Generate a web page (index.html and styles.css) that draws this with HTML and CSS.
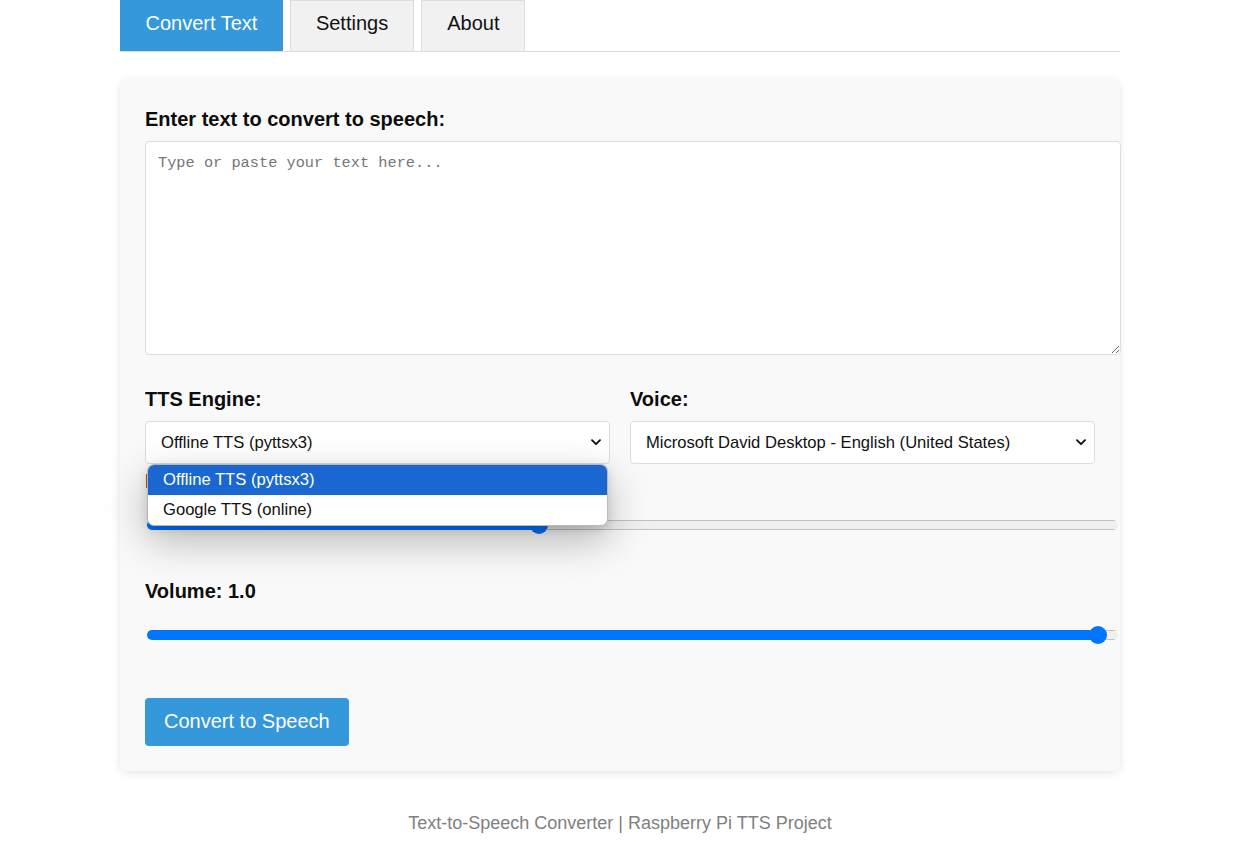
FILE: index.html
```html
<!DOCTYPE html>
<html lang="en">
<head>
<meta charset="utf-8">
<title>Text-to-Speech Converter</title>
<link rel="stylesheet" href="styles.css">
</head>
<body>
<div class="page">
  <nav class="tabs">
    <button class="tab active">Convert Text</button>
    <button class="tab">Settings</button>
    <button class="tab">About</button>
  </nav>

  <main class="card">
    <div class="group group-text">
      <label class="label" for="text">Enter text to convert to speech:</label>
      <textarea id="text" class="text-input" placeholder="Type or paste your text here..."></textarea>
    </div>

    <div class="row">
      <div class="col">
        <label class="label" for="engine">TTS Engine:</label>
        <div class="select-wrap">
          <select id="engine" class="select">
            <option>Offline TTS (pyttsx3)</option>
            <option>Google TTS (online)</option>
          </select>
          <svg class="chev" width="10" height="7" viewBox="0 0 10 7"><path d="M1 1.2 L5 5.2 L9 1.2" fill="none" stroke="#111" stroke-width="1.9" stroke-linecap="round" stroke-linejoin="round"/></svg>
          <ul class="dropdown">
            <li class="opt selected">Offline TTS (pyttsx3)</li>
            <li class="opt">Google TTS (online)</li>
          </ul>
        </div>
      </div>
      <div class="col">
        <label class="label" for="voice">Voice:</label>
        <div class="select-wrap">
          <select id="voice" class="select">
            <option>Microsoft David Desktop - English (United States)</option>
          </select>
          <svg class="chev" width="10" height="7" viewBox="0 0 10 7"><path d="M1 1.2 L5 5.2 L9 1.2" fill="none" stroke="#111" stroke-width="1.9" stroke-linecap="round" stroke-linejoin="round"/></svg>
        </div>
      </div>
    </div>

    <div class="group group-slider">
      <label class="label" for="rate">Rate: 150</label>
      <div class="slider-wrap">
        <input id="rate" class="range" type="range" min="50" max="300" value="150" style="--p: 40.5%">
      </div>
    </div>

    <div class="group group-slider">
      <label class="label" for="volume">Volume: 1.0</label>
      <div class="slider-wrap">
        <input id="volume" class="range" type="range" min="0" max="1" step="0.1" value="1" style="--p: 98%">
      </div>
    </div>

    <button class="convert">Convert to Speech</button>
  </main>

  <footer class="footer">Text-to-Speech Converter | Raspberry Pi TTS Project</footer>
</div>
</body>
</html>
```

FILE: styles.css
```css
* { box-sizing: border-box; }

html, body {
  margin: 0;
  padding: 0;
  background: #ffffff;
}

body {
  font-family: "Liberation Sans", Arial, sans-serif;
  color: #111;
}

.page {
  width: 1000px;
  margin: 0 0 0 120px;
}

/* Tabs */
.tabs {
  display: flex;
  border-bottom: 1px solid #ddd;
}

.tab {
  font-family: "Liberation Sans", Arial, sans-serif;
  font-size: 20px;
  line-height: 23px;
  color: #111;
  background: #f1f1f1;
  border: 1px solid #ddd;
  border-bottom: none;
  padding: 11px 25px 16px;
  margin: 0 7px 0 0;
  cursor: pointer;
}

.tab.active {
  background: #3498db;
  border-color: #3498db;
  color: #fff;
  padding-left: 24.5px;
  padding-right: 24.5px;
}

/* Card */
.card {
  display: block;
  margin-top: 27px;
  background: #f9f9f9;
  border-radius: 8px;
  box-shadow: 0 2px 8px rgba(0, 0, 0, 0.1);
  padding: 28px 25px 25px;
}

.label {
  display: block;
  font-size: 20px;
  line-height: 23px;
  font-weight: bold;
  color: #0d0d0d;
  padding-top: 1px;
  margin-bottom: 10px;
}

.group-text {
  margin-bottom: 32px;
}

.text-input {
  box-sizing: content-box;
  display: block;
  width: 100%;
  height: 188px;
  padding: 12px;
  margin: 0;
  border: 1px solid #ddd;
  border-radius: 4px;
  background: #fff;
  font-family: "Liberation Mono", "DejaVu Sans Mono", monospace;
  font-size: 15.3px;
  color: #111;
}

.text-input::placeholder {
  color: #767676;
}

/* Engine / voice row */
.row {
  display: grid;
  grid-template-columns: 1fr 1fr;
  column-gap: 20px;
  margin-bottom: 5px;
}

.select-wrap {
  position: relative;
}

.select {
  -webkit-appearance: none;
  appearance: none;
  display: block;
  width: 100%;
  height: 43px;
  padding: 0 36px 0 15px;
  border: 1px solid #ddd;
  border-radius: 4px;
  background: #fff;
  font-family: "Liberation Sans", Arial, sans-serif;
  font-size: 16.6px;
  color: #111;
}

.chev {
  position: absolute;
  right: 9px;
  top: 18px;
  pointer-events: none;
}

.dropdown {
  position: absolute;
  z-index: 10;
  left: 2px;
  top: 43px;
  width: 461px;
  margin: 0;
  padding: 0;
  list-style: none;
  background: #fff;
  border: 1px solid #b9b9b9;
  border-radius: 7px;
  overflow: hidden;
  box-shadow: 0 14px 40px rgba(0, 0, 0, 0.28), 0 3px 10px rgba(0, 0, 0, 0.12);
}

.opt {
  height: 30px;
  line-height: 30px;
  padding: 0 15px;
  font-size: 16.6px;
  color: #111;
}

.opt.selected {
  background: #1a67d2;
  color: #fff;
}

/* Sliders */
.group-slider {
  margin-bottom: 33px;
}

.group-slider:last-of-type {
  margin-bottom: 42px;
}

.slider-wrap {
  height: 43px;
  display: flex;
  align-items: center;
}

.range {
  -webkit-appearance: none;
  appearance: none;
  flex: none;
  width: 971px;
  height: 10px;
  margin: 0 0 0 2px;
  padding: 0 11px;
  border-radius: 5px;
  background:
    linear-gradient(to right, #0075ff var(--p), transparent var(--p)),
    linear-gradient(to bottom, #c2c2c2 0 1px, #efefef 1px calc(100% - 1px), #c2c2c2 calc(100% - 1px));
  outline: none;
}

.range::-webkit-slider-runnable-track {
  height: 10px;
  background: transparent;
  border: none;
}

.range::-webkit-slider-thumb {
  -webkit-appearance: none;
  appearance: none;
  width: 18px;
  height: 18px;
  margin-top: -4px;
  border: none;
  border-radius: 50%;
  background: #0075ff;
}

/* Button */
.convert {
  display: block;
  font-family: "Liberation Sans", Arial, sans-serif;
  font-size: 20px;
  line-height: 23px;
  padding: 12px 19px 13px;
  border: none;
  border-radius: 4px;
  background: #3498db;
  color: #fff;
  cursor: pointer;
}

/* Footer */
.footer {
  margin-top: 42px;
  text-align: center;
  font-size: 18px;
  line-height: 21px;
  color: #808080;
}
```
